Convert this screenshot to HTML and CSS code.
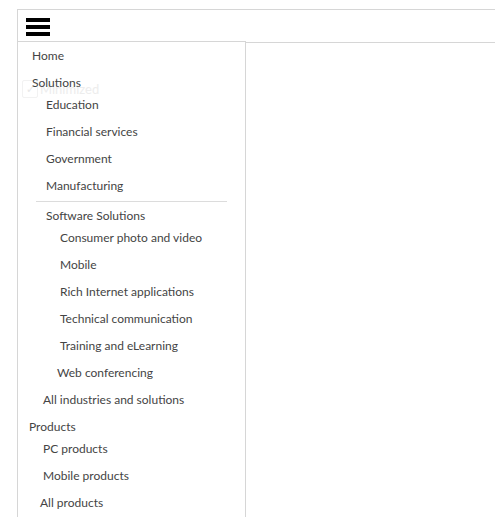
FILE: index.html
```html
<!DOCTYPE html>
<html lang="en">
<head>
<meta charset="utf-8">
<title>Menu</title>
<link rel="stylesheet" href="styles.css">
</head>
<body>
<div class="header">
  <button class="burger" aria-label="Menu">
    <span class="bar"></span><span class="bar"></span><span class="bar"></span>
  </button>
  <nav class="dropdown">
    <div class="ghost"><span class="ghost-box">✓</span><span class="ghost-text">Minimized</span></div>
    <ul class="menu">
      <li><a class="link d1">Home</a></li>
      <li><a class="link d1 parent">Solutions</a>
        <ul>
          <li><a class="link d2">Education</a></li>
          <li><a class="link d2">Financial services</a></li>
          <li><a class="link d2">Government</a></li>
          <li><a class="link d2">Manufacturing</a></li>
          <li class="sep"></li>
          <li><a class="link d2 parent">Software Solutions</a>
            <ul>
              <li><a class="link d3">Consumer photo and video</a></li>
              <li><a class="link d3">Mobile</a></li>
              <li><a class="link d3">Rich Internet applications</a></li>
              <li><a class="link d3">Technical communication</a></li>
              <li><a class="link d3">Training and eLearning</a></li>
            </ul>
          </li>
          <li><a class="link d3b">Web conferencing</a></li>
        </ul>
      </li>
      <li><a class="link d2b">All industries and solutions</a></li>
      <li><a class="link d0 parent">Products</a>
        <ul>
          <li><a class="link d2b">PC products</a></li>
          <li><a class="link d2b">Mobile products</a></li>
        </ul>
      </li>
      <li><a class="link d1b">All products</a></li>
    </ul>
  </nav>
</div>
</body>
</html>
```
FILE: styles.css
```css
html, body {
  margin: 0;
  padding: 0;
  background: #fff;
}
body {
  padding: 9px 0 0 17px;
  font-family: Lato, "Liberation Sans", sans-serif;
  font-size: 12px;
  color: #444;
  overflow: hidden;
  height: 517px;
  box-sizing: border-box;
}
.header {
  position: relative;
  border-top: 1px solid #d6d6d6;
  border-left: 1px solid #d6d6d6;
  border-bottom: 1px solid #d6d6d6;
  height: 32px;
  padding: 8px 0 0 8px;
  box-sizing: border-box;
  height: 34px;
}
.burger {
  display: flex;
  flex-direction: column;
  gap: 3px;
  width: 24px;
  padding: 0;
  margin: 0;
  border: 0;
  background: none;
}
.bar {
  display: block;
  width: 24px;
  height: 4px;
  background: #000;
}
.dropdown {
  position: absolute;
  left: -1px;
  top: 31px;
  width: 229px;
  height: 500px;
  box-sizing: border-box;
  background: #fff;
  border: 1px solid #d6d6d6;
  border-bottom: 0;
}
.ghost {
  position: absolute;
  left: 4px;
  top: 38px;
  display: flex;
  align-items: center;
  gap: 1px;
  color: #ededed;
  font-size: 13px;
}
.ghost-box {
  width: 14px;
  height: 16px;
  border: 1px solid #f2f2f2;
  border-radius: 2px;
  font-size: 11px;
  line-height: 16px;
  text-align: center;
  color: #e8e8e8;
}
.ghost-text {
  padding-left: 1px;
}
.menu {
  position: relative;
}
.menu, .menu ul {
  list-style: none;
  margin: 0;
  padding: 0;
}
.link {
  display: block;
  line-height: 17px;
  padding-top: 5px;
  padding-bottom: 5px;
  white-space: nowrap;
}
.link.parent {
  padding-bottom: 0;
}
.d0 { padding-left: 11px; }
.d1 { padding-left: 14px; }
.d1b { padding-left: 22px; }
.d2 { padding-left: 28px; }
.d2b { padding-left: 25px; }
.d3 { padding-left: 42px; }
.d3b { padding-left: 39px; }
.sep {
  margin: 2px 18px 0 18px;
  border-top: 1px solid #dcdcdc;
}
```
